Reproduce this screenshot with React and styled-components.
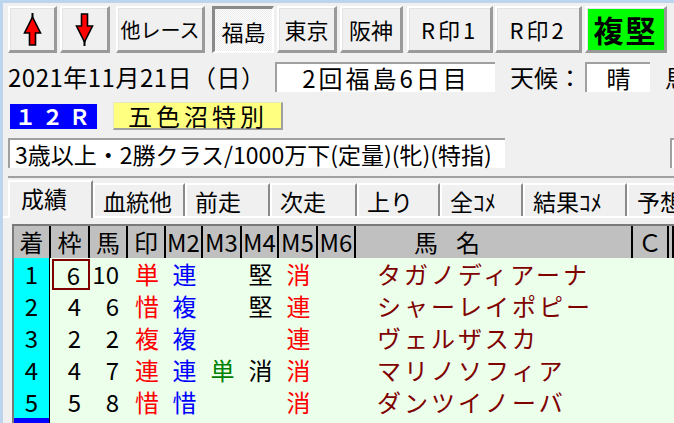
import React from "react";
import styled, { createGlobalStyle, css } from "styled-components";

const GlobalStyle = createGlobalStyle`
  html, body {
    margin: 0;
    padding: 0;
  }
  body {
    background: #f0f0f0;
    overflow: hidden;
    font-family: "Noto Sans CJK JP", "Noto Sans", sans-serif;
  }
`;

const Window = styled.div`
  width: 674px;
  height: 423px;
  box-sizing: border-box;
  border-top: 3px solid #bcd4ee;
  border-left: 3px solid #bcd4ee;
  overflow: hidden;
  background: #f0f0f0;
  color: #000;
`;

const Toolbar = styled.div`
  display: flex;
  gap: 3px;
  padding: 3px 0 0 5px;
  height: 47px;
`;

const raised = css`
  border-top: 2px solid #ffffff;
  border-left: 2px solid #ffffff;
  border-right: 3px solid #9a9a9a;
  border-bottom: 3px solid #9a9a9a;
  box-shadow: inset 1px 1px 0 #e3e3e3;
`;

const Button = styled.div`
  flex: none;
  box-sizing: border-box;
  width: ${(p) => p.$w}px;
  height: 47px;
  margin-left: ${(p) => p.$gap || 0}px;
  display: flex;
  align-items: center;
  justify-content: center;
  font-size: ${(p) => p.$size || 22}px;
  font-weight: ${(p) => (p.$bold ? 700 : 400)};
  letter-spacing: ${(p) => p.$ls || 0}px;
  background: ${(p) => (p.$green ? "#00ff00" : "#f0f0f0")};
  ${raised}
  ${(p) =>
    p.$pressed &&
    css`
      border-top: 3px solid #8a8a8a;
      border-left: 3px solid #8a8a8a;
      border-right: 2px solid #ffffff;
      border-bottom: 2px solid #ffffff;
      box-shadow: none;
      padding-top: 2px;
      background: repeating-conic-gradient(#ffffff 0 25%, #ebebeb 0 50%) 0 0 / 2px 2px;
    `}
`;

const Arrow = ({ down }) => (
  <svg width="19" height="33" viewBox="0 0 19 33">
    <g transform={down ? "translate(0 33) scale(1 -1)" : undefined}>
      <line x1="9.5" y1="0" x2="9.5" y2="6" stroke="#000" strokeWidth="2" />
      <polygon
        points="9.5,4 17.5,20 12.5,20 12.5,32 6.5,32 6.5,20 1.5,20"
        fill="#ff0000"
        stroke="#000"
        strokeWidth="1.6"
        strokeLinejoin="miter"
      />
    </g>
  </svg>
);

const InfoRow = styled.div`
  display: flex;
  align-items: center;
  margin-top: 9px;
  height: 30px;
  padding-left: 5px;
  white-space: nowrap;
`;

const DateText = styled.div`
  flex: none;
  width: 267px;
  font-size: 24px;
  line-height: 28px;
  letter-spacing: 0.5px;
`;

const SunkenBox = styled.div`
  flex: none;
  box-sizing: border-box;
  width: ${(p) => p.$w}px;
  height: 30px;
  display: flex;
  align-items: center;
  justify-content: ${(p) => (p.$left ? "flex-start" : "center")};
  padding-left: ${(p) => (p.$left ? 5 : 0)}px;
  margin-left: ${(p) => p.$ml || 0}px;
  background: #fff;
  border-top: 2px solid #a0a0a0;
  border-left: 2px solid #a0a0a0;
  font-size: ${(p) => p.$size || 24}px;
  line-height: 28px;
  letter-spacing: ${(p) => p.$ls || 0}px;
  white-space: nowrap;
`;

const Label = styled.div`
  flex: none;
  margin-left: ${(p) => p.$ml || 0}px;
  font-size: 24px;
  line-height: 28px;
  width: ${(p) => (p.$w ? `${p.$w}px` : "auto")};
`;

const RaceRow = styled.div`
  display: flex;
  align-items: center;
  gap: 16px;
  margin-top: 10px;
  padding-left: 7px;
  height: 28px;
`;

const RaceNo = styled.div`
  box-sizing: border-box;
  width: 87px;
  height: 25px;
  padding-left: 5px;
  display: flex;
  align-items: center;
  background: #0000ff;
  color: #fff;
  font-size: 21px;
  line-height: 25px;
  font-weight: 700;
  letter-spacing: 6px;
`;

const RaceName = styled.div`
  box-sizing: border-box;
  width: 170px;
  height: 28px;
  padding-left: 14px;
  display: flex;
  align-items: center;
  background: #ffff80;
  border-top: 1px solid #e8e8c0;
  border-left: 1px solid #e8e8c0;
  border-right: 2px solid #a0a0a0;
  border-bottom: 2px solid #a0a0a0;
  font-size: 24px;
  line-height: 25px;
  letter-spacing: 4px;
`;

const CondRow = styled.div`
  display: flex;
  align-items: center;
  margin-top: 8px;
  padding-left: 5px;
`;

const Divider = styled.div`
  margin: 8px 0 0 5px;
  height: 2px;
  background: #a0a0a0;
`;

const TabBar = styled.div`
  display: flex;
  align-items: flex-end;
  height: 36px;
  padding: 2px 0 0 5px;
  border-bottom: 2px solid #ffffff;
  white-space: nowrap;
`;

const Tab = styled.div`
  flex: none;
  box-sizing: border-box;
  width: ${(p) => p.$w}px;
  height: ${(p) => (p.$active ? 38 : 33)}px;
  margin-bottom: ${(p) => (p.$active ? -2 : 0)}px;
  padding-left: ${(p) => (p.$active ? 11 : 8)}px;
  padding-bottom: ${(p) => (p.$active ? 4 : 0)}px;
  display: flex;
  align-items: center;
  background: #f0f0f0;
  border-top: 2px solid #ffffff;
  border-left: 2px solid #ffffff;
  border-right: 2px solid #8a8a8a;
  font-size: 23px;
  line-height: 28px;
`;

const Table = styled.div`
  margin: 6px 0 0 9px;
  border-top: 2px solid #7a7a7a;
  border-left: 2px solid #7a7a7a;
`;

const cols = "37px 39px 38px 38px 37px 39px 37px 39px 38px 277px 36px 1fr";

const Row = styled.div`
  display: grid;
  grid-template-columns: ${cols};
  height: 32px;
  background: ${(p) => (p.$head ? "#c0c0c0" : "#ebffeb")};
`;

const HeadCell = styled.div`
  box-sizing: border-box;
  display: flex;
  align-items: center;
  justify-content: ${(p) => (p.$left ? "flex-start" : "center")};
  padding-left: ${(p) => p.$pl || 0}px;
  border-right: 2px solid #000;
  font-size: 24px;
  line-height: 30px;
  letter-spacing: ${(p) => p.$ls || 0}px;
  white-space: nowrap;
`;

const Cell = styled.div`
  box-sizing: border-box;
  display: flex;
  align-items: center;
  justify-content: ${(p) =>
    p.$align === "right" ? "flex-end" : p.$align === "left" ? "flex-start" : "center"};
  padding: 0 ${(p) => (p.$align === "right" ? 9 : 0)}px 0
    ${(p) => (p.$align === "left" ? 21 : 0)}px;
  font-size: 24px;
  line-height: 30px;
  color: ${(p) => p.$color || "#000"};
  letter-spacing: ${(p) => p.$ls || 0}px;
  white-space: nowrap;
  ${(p) =>
    p.$boxed &&
    css`
      margin: 1px 0 0 1px;
      border: 2px solid #800000;
      padding-right: 8px;
      line-height: 27px;
    `}
`;

const PosCell = styled.div`
  box-sizing: border-box;
  display: flex;
  align-items: center;
  justify-content: center;
  background: ${(p) => (p.$selected ? "#0000ff" : "#00ffff")};
  border-right: 1px solid #000;
  margin-right: 1px;
  font-size: 24px;
  line-height: 30px;
`;

const RED = "#ff0000";
const BLUE = "#0000ff";
const GREEN = "#008000";
const MAROON = "#800000";

const results = [
  { pos: "1", waku: "6", uma: "10", mark: "単", m2: "連", m3: "", m4: "堅", m5: "消", name: "タガノディアーナ", boxed: true },
  { pos: "2", waku: "4", uma: "6", mark: "惜", m2: "複", m3: "", m4: "堅", m5: "連", name: "シャーレイポピー" },
  { pos: "3", waku: "2", uma: "2", mark: "複", m2: "複", m3: "", m4: "", m5: "連", name: "ヴェルザスカ" },
  { pos: "4", waku: "4", uma: "7", mark: "連", m2: "連", m3: "単", m4: "消", m5: "消", name: "マリノソフィア" },
  { pos: "5", waku: "5", uma: "8", mark: "惜", m2: "惜", m3: "", m4: "", m5: "消", name: "ダンツイノーバ" },
];

const tabs = [
  { label: "成績", w: 85, active: true },
  { label: "血統他", w: 92 },
  { label: "前走", w: 85 },
  { label: "次走", w: 87 },
  { label: "上り", w: 83 },
  { label: "全ｺﾒ", w: 83 },
  { label: "結果ｺﾒ", w: 104 },
  { label: "予想", w: 70 },
];

export default function App() {
  return (
    <Window>
      <GlobalStyle />
      <Toolbar>
        <Button $w={49}>
          <Arrow />
        </Button>
        <Button $w={50}>
          <Arrow down />
        </Button>
        <Button $w={89} $gap={3} $size={20}>
          他レース
        </Button>
        <Button $w={62} $gap={4} $pressed>
          福島
        </Button>
        <Button $w={60}>東京</Button>
        <Button $w={63}>阪神</Button>
        <Button $w={86} $gap={1} $ls={3}>
          R印1
        </Button>
        <Button $w={87} $gap={-1} $ls={3}>
          R印2
        </Button>
        <Button $w={82} $green $bold $size={30} $ls={2}>
          複堅
        </Button>
      </Toolbar>

      <InfoRow>
        <DateText>2021年11月21日（日）</DateText>
        <SunkenBox $w={220} $ls={3}>
          2回福島6日目
        </SunkenBox>
        <Label $ml={15} $w={75}>
          天候：
        </Label>
        <SunkenBox $w={65}>晴</SunkenBox>
        <Label $ml={15}>馬場：</Label>
      </InfoRow>

      <RaceRow>
        <RaceNo>１２Ｒ</RaceNo>
        <RaceName>五色沼特別</RaceName>
      </RaceRow>

      <CondRow>
        <SunkenBox $w={497} $left $size={23}>
          3歳以上・2勝クラス/1000万下(定量)(牝)(特指)
        </SunkenBox>
        <SunkenBox $w={60} $ml={165} />
      </CondRow>

      <Divider />

      <TabBar>
        {tabs.map((t) => (
          <Tab key={t.label} $w={t.w} $active={t.active}>
            {t.label}
          </Tab>
        ))}
      </TabBar>

      <Table>
        <Row $head>
          <HeadCell>着</HeadCell>
          <HeadCell>枠</HeadCell>
          <HeadCell>馬</HeadCell>
          <HeadCell>印</HeadCell>
          <HeadCell>M2</HeadCell>
          <HeadCell>M3</HeadCell>
          <HeadCell>M4</HeadCell>
          <HeadCell>M5</HeadCell>
          <HeadCell>M6</HeadCell>
          <HeadCell $left $pl={58} $ls={-3}>
            馬　名
          </HeadCell>
          <HeadCell>Ｃ</HeadCell>
          <HeadCell />
        </Row>
        {results.map((r) => (
          <Row key={r.pos}>
            <PosCell>{r.pos}</PosCell>
            <Cell $align="right" $boxed={r.boxed}>
              {r.waku}
            </Cell>
            <Cell $align="right">{r.uma}</Cell>
            <Cell $color={RED}>{r.mark}</Cell>
            <Cell $color={BLUE}>{r.m2}</Cell>
            <Cell $color={GREEN}>{r.m3}</Cell>
            <Cell>{r.m4}</Cell>
            <Cell $color={RED}>{r.m5}</Cell>
            <Cell />
            <Cell $align="left" $color={MAROON} $ls={3}>
              {r.name}
            </Cell>
            <Cell />
            <Cell />
          </Row>
        ))}
        <Row>
          <PosCell $selected />
        </Row>
      </Table>
    </Window>
  );
}
